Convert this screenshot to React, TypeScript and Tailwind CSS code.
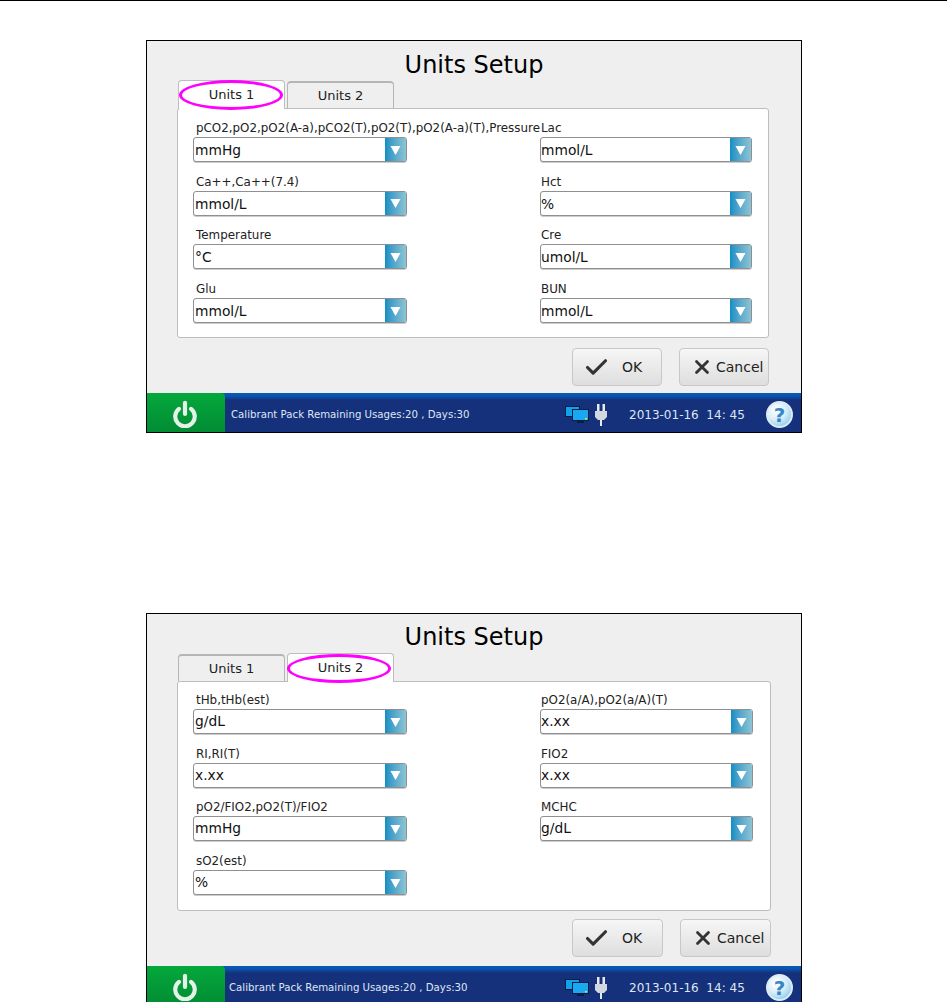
import React from 'react';
import { Check, X } from 'lucide-react';

type Field = { label: string; value: string };

const UNITS_1: Field[][] = [
  [
    { label: 'pCO2,pO2,pO2(A-a),pCO2(T),pO2(T),pO2(A-a)(T),Pressure', value: 'mmHg' },
    { label: 'Ca++,Ca++(7.4)', value: 'mmol/L' },
    { label: 'Temperature', value: '°C' },
    { label: 'Glu', value: 'mmol/L' },
  ],
  [
    { label: 'Lac', value: 'mmol/L' },
    { label: 'Hct', value: '%' },
    { label: 'Cre', value: 'umol/L' },
    { label: 'BUN', value: 'mmol/L' },
  ],
];

const UNITS_2: Field[][] = [
  [
    { label: 'tHb,tHb(est)', value: 'g/dL' },
    { label: 'RI,RI(T)', value: 'x.xx' },
    { label: 'pO2/FIO2,pO2(T)/FIO2', value: 'mmHg' },
    { label: 'sO2(est)', value: '%' },
  ],
  [
    { label: 'pO2(a/A),pO2(a/A)(T)', value: 'x.xx' },
    { label: 'FIO2', value: 'x.xx' },
    { label: 'MCHC', value: 'g/dL' },
  ],
];

const Select = ({ label, value, right, second }: Field & { right: boolean; second: boolean }) => (
  <div className="h-[53.7px]">
    <div className={`h-[20px] pt-[4px] text-[11.9px] leading-[14px] whitespace-nowrap text-[#222] ${right ? 'pl-[1px]' : 'pl-[3px]'}`}>{label}</div>
    <div className="flex h-[25px] items-stretch rounded-[3px] border border-[#8f8f8f] bg-white shadow-[0_1px_0_#ccc]">
      <span className={`flex-1 text-[13.8px] text-[#111] ${right ? 'pl-0' : 'pl-[1px]'} ${second ? 'leading-[23px]' : 'leading-[24px]'}`}>{value}</span>
      <span className="flex w-[21px] items-center justify-center bg-gradient-to-r from-[#0a8fc4] to-[#8cc4d4]">
        <svg width="11" height="10" viewBox="0 0 11 10">
          <path d="M0.5 1h10L5.5 10z" fill="#fff" />
        </svg>
      </span>
    </div>
  </div>
);

const Tab = ({ label, active }: { label: string; active: boolean }) => (
  <div
    className={
      active
        ? 'z-10 mt-[1px] -mb-px flex h-[29px] w-[107px] items-center justify-center rounded-t-[4px] border border-b-0 border-[#bdbdbd] bg-white text-[13px] text-[#222]'
        : 'mt-[2px] flex h-[27px] w-[107px] items-center justify-center rounded-t-[4px] border border-b-0 border-t-2 border-[#b5b5b5] bg-[#efefef] pt-[1px] text-[13px] text-[#222]'
    }
  >
    {label}
  </div>
);

const PowerIcon = () => (
  <svg width="26" height="28" viewBox="0 0 28 30" fill="none" stroke="#e4f2e8" strokeWidth="4.5" strokeLinecap="round">
    <path d="M14 3v12" />
    <path d="M7.5 9.5a10.5 10.5 0 1 0 13 0" />
  </svg>
);

const NetworkIcon = () => (
  <svg width="24" height="18" viewBox="0 0 24 18">
    <rect x="0.5" y="0.5" width="14" height="10" fill="#12a2ea" stroke="#071d45" />
    <rect x="7.5" y="3.5" width="16" height="11" fill="#1aa8f0" stroke="#071d45" />
    <rect x="20" y="12" width="2" height="1.5" fill="#e8e020" />
    <rect x="12" y="15" width="7" height="2" fill="#071d45" />
  </svg>
);

const PlugIcon = () => (
  <svg width="14" height="22" viewBox="0 0 14 22">
    <rect x="3" y="0" width="2.5" height="7" fill="#e6eaef" />
    <rect x="8.5" y="0" width="2.5" height="7" fill="#e6eaef" />
    <path d="M1 7h12v6l-3 3H4l-3-3z" fill="#d2d8df" />
    <rect x="6" y="16" width="2" height="6" fill="#e6eaef" />
  </svg>
);

const HelpIcon = () => (
  <div className="flex h-[27px] w-[27px] items-center justify-center rounded-full border-2 border-[#dcecf5] bg-[radial-gradient(circle_at_35%_30%,#fff_0%,#d8eef9_45%,#6fbbe8_100%)] text-[20px] leading-none font-bold text-[#3a85c5]">
    ?
  </div>
);

const Screen = ({ active, columns }: { active: 1 | 2; columns: Field[][] }) => {
  const second = active === 2;
  return (
    <div className="flex w-[656px] flex-col border border-black bg-[#efefef]">
      <div className={second ? 'h-[38px] pt-[6px] text-center text-[24px] leading-[34px] text-black' : 'h-[38px] pt-[7px] text-center text-[24px] leading-[34px] text-black'}>
        Units Setup
      </div>
      <div className="pl-[31px]">
        <div className="relative flex w-fit gap-[2px]">
          <Tab label="Units 1" active={active === 1} />
          <Tab label="Units 2" active={second} />
          {second ? (
            <div className="absolute top-[2px] left-[109px] z-20 h-[29px] w-[104px] rounded-[50%] border-[3px] border-[#f0f]" />
          ) : (
            <div className="absolute top-[1px] left-[1px] z-20 h-[30px] w-[104px] rounded-[50%] border-[3px] border-[#f0f]" />
          )}
        </div>
      </div>
      <div
        className={
          second
            ? 'ml-[30px] mr-[30px] grid h-[230px] grid-cols-[214px_213px] content-start gap-x-[133px] rounded-[3px] border border-[#bdbdbd] bg-white pt-[7px] pl-[15px]'
            : 'ml-[30px] mr-[32px] grid h-[230px] grid-cols-[214px_212px] content-start gap-x-[133px] rounded-[3px] border border-[#bdbdbd] bg-white pt-[8px] pl-[15px]'
        }
      >
        {columns.map((col, i) => (
          <div key={i}>
            {col.map((f) => (
              <Select key={f.label} {...f} right={i === 1} second={second} />
            ))}
          </div>
        ))}
      </div>
      <div className={second ? 'flex h-[55px] items-start justify-end gap-[17px] pt-[8px] pr-[30px]' : 'flex h-[55px] items-start justify-end gap-[17px] pt-[10px] pr-[32px]'}>
        <div className={`flex h-[38px] items-center rounded-[4px] border border-[#c8c8c8] bg-gradient-to-b from-[#f6f6f6] to-[#dedede] pl-[10px] text-[14px] text-[#222] ${second ? 'w-[91px]' : 'w-[90px]'}`}>
          <Check size={27} strokeWidth={2.8} className="mr-[12px] text-[#333]" />
          OK
        </div>
        <div className={`flex h-[38px] items-center rounded-[4px] border border-[#c8c8c8] bg-gradient-to-b from-[#f6f6f6] to-[#dedede] pl-[11px] text-[14px] text-[#222] ${second ? 'w-[91px]' : 'w-[90px]'}`}>
          <X size={22} strokeWidth={3} className="mr-[3px] text-[#333]" />
          Cancel
        </div>
      </div>
      <div className="flex h-[39px] items-stretch bg-[linear-gradient(#0a5ab5_0,#0a54ad_3px,#15317c_7px)]">
        <div className="flex w-[78px] items-center justify-center rounded-tr-[4px] bg-gradient-to-b from-[#04a83c] to-[#028c34] pt-[3px] pr-[3px]">
          <PowerIcon />
        </div>
        <div className={`flex flex-1 items-center pt-[4px] text-[10.2px] whitespace-nowrap text-[#dfe6f2] ${second ? 'pl-[4px]' : 'pl-[6px]'}`}>
          Calibrant Pack Remaining Usages:20 , Days:30
        </div>
        <div className="flex w-[64px] items-center gap-[5px] pt-[4px]">
          <NetworkIcon />
          <PlugIcon />
        </div>
        <div className="flex w-[172px] items-center justify-between pt-[4px] pr-[8px] text-[12px] text-[#dfe6f2]">
          <span>2013-01-16&nbsp;&nbsp;14: 45</span>
          <HelpIcon />
        </div>
      </div>
    </div>
  );
};

const App: React.FC = () => {
  return (
    <div className="h-[1002px] w-[947px] overflow-hidden bg-white font-['DejaVu_Sans',sans-serif]">
      <div className="h-px w-full bg-black" />
      <div className="flex flex-col items-center gap-[180px] pt-[39px] pl-[1px]">
        <Screen active={1} columns={UNITS_1} />
        <Screen active={2} columns={UNITS_2} />
      </div>
    </div>
  );
};

export default App;
